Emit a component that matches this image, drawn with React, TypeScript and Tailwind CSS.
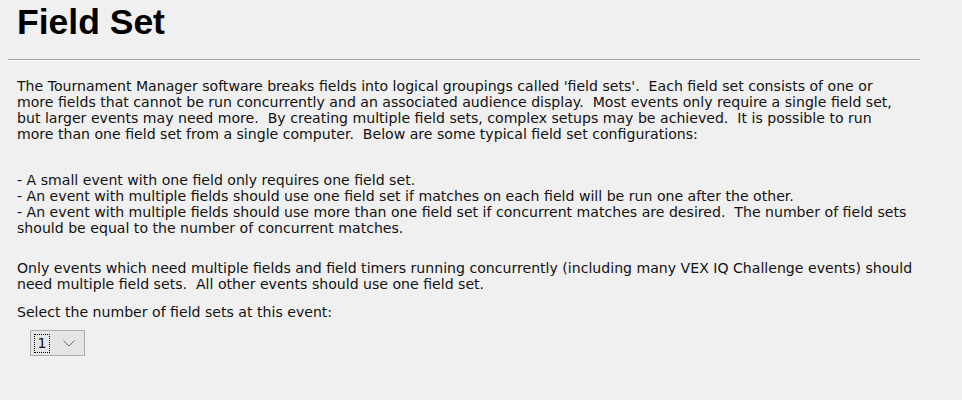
const intro = `The Tournament Manager software breaks fields into logical groupings called 'field sets'.  Each field set consists of one or
more fields that cannot be run concurrently and an associated audience display.  Most events only require a single field set,
but larger events may need more.  By creating multiple field sets, complex setups may be achieved.  It is possible to run
more than one field set from a single computer.  Below are some typical field set configurations:`;

const configs = `- A small event with one field only requires one field set.
- An event with multiple fields should use one field set if matches on each field will be run one after the other.
- An event with multiple fields should use more than one field set if concurrent matches are desired.  The number of field sets
should be equal to the number of concurrent matches.`;

const note = `Only events which need multiple fields and field timers running concurrently (including many VEX IQ Challenge events) should
need multiple field sets.  All other events should use one field set.`;

const App = () => {
  return (
    <div className="w-[962px] h-[400px] bg-[#f0f0f0] overflow-hidden">
      <h1 className="pl-[17px] pt-[2px] h-[59px] text-[35.5px] leading-[40px] font-bold text-black font-['Liberation_Sans',Arial,sans-serif]">
        Field Set
      </h1>
      {/* etched divider */}
      <div className="ml-[8px] w-[912px] h-[2px] border-t border-[#a0a0a0] border-b border-b-white" />

      <div className="pl-[17px] pt-[17px] text-[14.1px] leading-[16px] text-[#111] whitespace-pre font-['DejaVu_Sans',Tahoma,sans-serif]">
        <p>{intro}</p>
        <p className="mt-[30px]">{configs}</p>
        <p className="mt-[24px]">{note}</p>
        <p className="mt-[12px]">Select the number of field sets at this event:</p>

        {/* field set count dropdown */}
        <div className="mt-[10px] ml-[13px] w-[55px] h-[26px] flex items-center pl-[3px] bg-[#e5e5e5] border border-[#adadad]">
          <span className="w-[16px] h-[19px] flex items-center justify-center border border-dotted border-black">1</span>
          <svg className="ml-[13px]" width="12" height="7" viewBox="0 0 12 7" fill="none">
            <polyline points="0.5,0.5 6,6 11.5,0.5" stroke="#707070" strokeWidth="1" />
          </svg>
        </div>
      </div>
    </div>
  );
};

export default App;
